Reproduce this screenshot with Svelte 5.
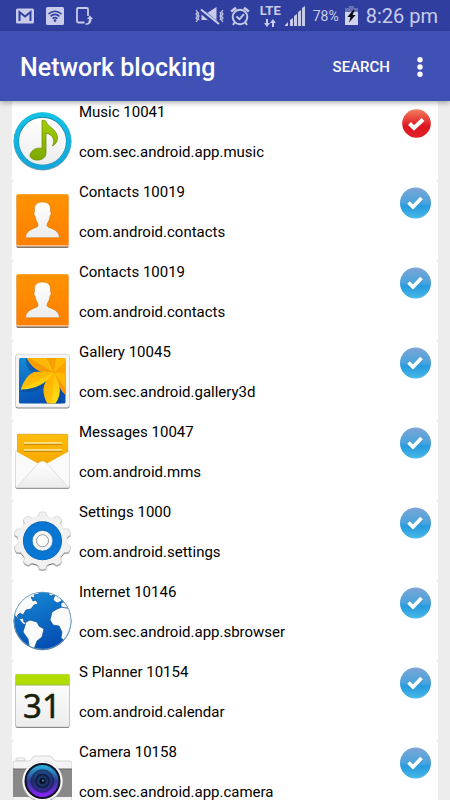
<script>
  let apps = $state([
    { name: 'Music', uid: 10041, pkg: 'com.sec.android.app.music', icon: 'music', blocked: true },
    { name: 'Contacts', uid: 10019, pkg: 'com.android.contacts', icon: 'contacts', blocked: false },
    { name: 'Contacts', uid: 10019, pkg: 'com.android.contacts', icon: 'contacts', blocked: false },
    { name: 'Gallery', uid: 10045, pkg: 'com.sec.android.gallery3d', icon: 'gallery', blocked: false },
    { name: 'Messages', uid: 10047, pkg: 'com.android.mms', icon: 'messages', blocked: false },
    { name: 'Settings', uid: 1000, pkg: 'com.android.settings', icon: 'settings', blocked: false },
    { name: 'Internet', uid: 10146, pkg: 'com.sec.android.app.sbrowser', icon: 'internet', blocked: false },
    { name: 'S Planner', uid: 10154, pkg: 'com.android.calendar', icon: 'planner', blocked: false },
    { name: 'Camera', uid: 10158, pkg: 'com.sec.android.app.camera', icon: 'camera', blocked: false }
  ]);
  const teeth = Array.from({ length: 10 }, (_, i) => i * 36);
</script>

<svg class="defs" aria-hidden="true">
  <defs>
    <linearGradient id="paper" x2="0" y2="1"><stop stop-color="#fff" /><stop offset="1" stop-color="#ededed" /></linearGradient>
    <linearGradient id="orange" x2="0" y2="1"><stop stop-color="#ff9200" /><stop offset="1" stop-color="#ff8000" /></linearGradient>
    <linearGradient id="cyan" x2="0" y2="1"><stop stop-color="#13c3e6" /><stop offset="1" stop-color="#14a5da" /></linearGradient>
    <linearGradient id="green" x2="0" y2="1"><stop stop-color="#a3cf00" /><stop offset="1" stop-color="#7ea800" /></linearGradient>
    <linearGradient id="sea" x2="0.3" y2="1"><stop stop-color="#168bd6" /><stop offset="1" stop-color="#0550b4" /></linearGradient>
    <linearGradient id="petal" x2="0.6" y2="1"><stop stop-color="#ffb000" /><stop offset="1" stop-color="#ffde12" /></linearGradient>
    <linearGradient id="amber" x2="0" y2="1"><stop stop-color="#fdbd0b" /><stop offset="1" stop-color="#f6a800" /></linearGradient>
    <linearGradient id="lens" x2="0" y2="1"><stop stop-color="#29b3df" /><stop offset="0.5" stop-color="#303b91" /><stop offset="1" stop-color="#8c22ff" /></linearGradient>
    <linearGradient id="red" x2="0" y2="1"><stop stop-color="#f08060" /><stop offset="0.45" stop-color="#e63030" /><stop offset="0.6" stop-color="#dc1621" /><stop offset="1" stop-color="#e32028" /></linearGradient>
    <linearGradient id="blue" x2="0" y2="1"><stop stop-color="#7ba5d6" /><stop offset="0.5" stop-color="#4ba4dc" /><stop offset="0.6" stop-color="#279ade" /><stop offset="1" stop-color="#48b9e8" /></linearGradient>
    <clipPath id="photo"><rect x="7" y="7" width="46.500" height="45.500" rx="1.500" /></clipPath>
    <clipPath id="globe"><circle cx="30.500" cy="29.700" r="28.600" /></clipPath>
  </defs>
</svg>

<div class="screen">
  <div class="status">
    <div class="group notices">
      <svg width="18" height="16" viewBox="0 0 18 16"><rect width="18" height="15" y=".5" rx="1.500" fill="#c8ccea" /><path d="M3.500 13V4l5.500 4.500L14.500 4v9" fill="none" stroke="#303f9f" stroke-width="2" /></svg>
      <svg width="18" height="18" viewBox="0 0 18 18"><rect width="18" height="18" rx="1.500" fill="#c8ccea" /><g fill="none" stroke="#303f9f" stroke-width="1.600"><path d="M2.500 7Q9 1.500 15.500 7M4.500 9.300Q9 5.300 13.500 9.300M6.500 11.700Q9 9.500 11.500 11.700" /></g><circle cx="9" cy="13.600" r="1.300" fill="#303f9f" /></svg>
      <svg width="17" height="18" viewBox="0 0 17 18"><path d="M8.500 15.500H2.200Q1 15.500 1 14.300V2.200Q1 1 2.200 1h8.600Q12 1 12 2.200V9" fill="none" stroke="#c8ccea" stroke-width="1.800" /><path d="M9.500 16.500q3.500 0 3.500-4.500h-2l3-3.500 3 3.500h-1.500q.5 5.500-6 6z" fill="#c8ccea" /></svg>
    </div>
    <div class="group signals">
      <svg width="29" height="18" viewBox="0 0 29 18"><g fill="none" stroke="#c8ccea" stroke-width="1.200"><path d="M1 3l1.500 2L1 7l1.500 2L1 11l1.500 2L1 15M4 5L3 7l1 2-1 2 1 2M25 5l1 2-1 2 1 2-1 2M28 3l-1.500 2L28 7l-1.500 2L28 11l-1.500 2 1.500 2" /></g><path d="M6.500 5.500H13L21.500 0v18L13 13H6.500z" fill="#c8ccea" /><path d="M4.500 2.500L24 19" stroke="#303f9f" stroke-width="5" /><path d="M6 2.500L24 17" stroke="#c8ccea" stroke-width="2" /></svg>
      <svg width="20" height="20" viewBox="0 0 20 20"><g fill="none" stroke="#c8ccea" stroke-width="1.900"><circle cx="10" cy="11" r="7.300" /><path d="M6.500 10.500l3 2.700 4.500-5M4.500 16.500L3 19M15.500 16.500L17 19" /><path d="M1.200 5.500L6 1.700M18.800 5.500L14 1.700" stroke-width="2.500" /></g></svg>
      <div class="lte"><span>LTE</span><svg width="12" height="8" viewBox="0 0 12 8"><path d="M2 0h2v4h2L3 8 0 4h2zM8 8h2V4h2L9 0 6 4h2z" fill="#c8ccea" /></svg></div>
      <svg class="bars" width="20" height="20" viewBox="0 0 20 20"><path d="M0 20v-1l3-3v4zM5 20v-6l3-2v8zM9 20V10l3-2v12zM13 20V6l3-2v16zM17 20V2l3-2v20z" fill="#c8ccea" /></svg>
      <span class="percent">78%</span>
      <svg class="battery" width="13" height="19" viewBox="0 0 13 19"><path d="M4 0h5v2h4v5H0V2h4z" fill="#6871b1" /><path d="M0 6h13v13H0z" fill="#d0d3ee" /><path d="M8.500 3.500L2.500 11h3L4 16.500l6.500-7.500h-3L9.500 4z" fill="#070914" /></svg>
      <span class="time">8:26 pm</span>
    </div>
  </div>

  <header>
    <h1>Network blocking</h1>
    <button class="search" type="button">SEARCH</button>
    <button class="more" type="button" aria-label="More options">
      <svg width="6" height="20" viewBox="0 0 6 20" fill="#fff"><circle cx="3" cy="2.700" r="2.700" /><circle cx="3" cy="10" r="2.700" /><circle cx="3" cy="17.300" r="2.700" /></svg>
    </button>
  </header>

  <main>
    <ul>
      {#each apps as app, i}
        <li>
          <svg class="icon" width="60" height="60" viewBox="0 0 60 60" aria-hidden="true">
            {#if app.icon === 'music'}
              <circle cx="30.500" cy="30.500" r="29" fill="#8b9ca3" />
              <circle cx="30.500" cy="30" r="28.800" fill="url(#cyan)" />
              <circle cx="30.500" cy="30" r="24" fill="#13799f" />
              <circle cx="30.500" cy="30.300" r="23.500" fill="url(#paper)" />
              <path d="M30 9.500q2.500-1 4 1c1 5 12 8 11.500 17-.3 4-2.500 6-5 7.500 2.500-5 1.500-11-6.500-13v20c0 5.500-6 7.500-10 7-5-.5-7.500-4-5-7.500 2.500-4 7-5 11-4z" fill="url(#green)" stroke="#668800" stroke-width=".7" />
            {:else if app.icon === 'contacts'}
              <rect x="4.500" y="4" width="52" height="53" rx="1.500" fill="#81756a" />
              <rect x="4.500" y="3.500" width="52" height="52" rx="1.500" fill="#f8d2a7" />
              <rect x="4.500" y="3.300" width="52" height="51" rx="1.500" fill="url(#orange)" />
              <path d="M13.500 46.700C14 40 19 38.500 25 36q1.500-1 .8-3.500Q23.500 29 23 25c-1.200-.7-1.500-4-.3-4.300C21.500 14 25 11 30.500 11s9 3 7.800 9.700c1.200.3.900 3.600-.3 4.300-.5 4-1.500 5.500-2.800 7.500q-.7 2.500.8 3.500C42 38.500 47 40 47.500 46.700z" fill="url(#paper)" stroke="#c96a00" stroke-width=".5" />
            {:else if app.icon === 'gallery'}
              <rect x="3.500" y="4" width="54" height="53.500" rx="2.500" fill="#858585" />
              <rect x="3.500" y="3.300" width="54" height="53" rx="2.500" fill="#f5f5f5" stroke="#cecece" stroke-width=".7" />
              <g clip-path="url(#photo)">
                <rect x="7" y="7" width="47" height="46" fill="url(#sea)" />
                <path d="M14 5Q13 20 24 22L8 41Q24 42 32 36q-2 10 4 18h13V42l6 4z" fill="#073f85" opacity=".5" />
                <path d="M42 21.500L34 5h22v40Q47 40 42 21.500z" fill="#ffb905" />
                <path d="M42 21.500Q22 24 14 5h20z" fill="#ffb80a" />
                <path d="M42 21.500Q22 24 14 5z" fill="#f99b00" />
                <path d="M42 21.500L34 5h10z" fill="#fa9f00" />
                <path d="M42 21.500L54 10v12z" fill="#fca300" />
                <path d="M42 21.500L55 40v5Q47 40 42 21.500z" fill="#f99600" />
                <path d="M42 21.500Q51 37 46 48L42 55h-5Q30 45 32 35 35 26 42 21.500z" fill="url(#petal)" />
                <path d="M42 21.500L39 55h-2Q30 45 32 35 35 26 42 21.500z" fill="#ff9e00" opacity=".35" />
                <path d="M42 21.500Q31 38 8.700 38.500 13 25 22 21q9-1 20 .5z" fill="url(#petal)" />
                <path d="M42 21.500L8.700 38.500Q13 25 22 21z" fill="#ff9e00" opacity=".3" />
              </g>
            {:else if app.icon === 'messages'}
              <path d="M3.500 20l27 10 27-10v36q0 2-2 2h-50q-2 0-2-2z" fill="#888" />
              <path d="M3.500 20h54v35q0 2-2 2h-50q-2 0-2-2z" fill="#f3f3f3" stroke="#b5b5b5" stroke-width=".7" />
              <path d="M5.500 3.300h50.200V22L34 33h-7L5.500 22z" fill="url(#amber)" stroke="#d99100" stroke-width=".6" />
              <path d="M12 13h38M12 20h38" stroke="#b97d00" stroke-width="1.300" /><path d="M12 12h38M12 19h38" stroke="#ffeda6" stroke-width="1.400" />
              <path d="M3.500 20L27 33v1L4.500 56.500l-1-2zM57.500 20L34 33v1l22.500 22.500 1-2z" fill="#fafafa" />
              <path d="M4.500 56.500L26 32.500q4.500-4.500 9 0l21.500 24z" fill="url(#paper)" stroke="#ccc" stroke-width=".6" />
            {:else if app.icon === 'settings'}
              {#each [['#777', 1.2], ['#f1f1f1', 0]] as layer}
                <g fill={layer[0]} transform="translate(0 {layer[1]})">
                  {#each teeth as angle}
                    <path d="M21.500 7.500q4-.5 5-3.500l.8-2.500Q30.500 0 33.700 1.500l.8 2.500q1 3 5 3.500z" transform="rotate({angle} 30.500 29.700)" stroke="#c4c4c4" stroke-width=".5" />
                  {/each}
                  <circle cx="30.500" cy="29.700" r="24.500" />
                </g>
              {/each}
              <circle cx="30.500" cy="29.700" r="19.500" fill="#075a9c" />
              <circle cx="30.500" cy="30" r="19" fill="#0877d4" />
              <circle cx="30.500" cy="29.700" r="10.300" fill="#f6f6f6" stroke="#075ea5" stroke-width=".6" />
              <circle cx="30.500" cy="29.700" r="6" fill="#fff" stroke="#969696" stroke-width="1" />
            {:else if app.icon === 'internet'}
              <circle cx="30.500" cy="30.200" r="29" fill="#647f94" />
              <circle cx="30.500" cy="29.700" r="28.700" fill="url(#sea)" />
              <g clip-path="url(#globe)" fill="#fafafa" stroke="#08529c" stroke-width=".7">
                <path d="M0 0h27v3l-5 1 1 3-4-1 2 4 3-1 2 4-4 1-3 4-5 1-3 5-3-2-3 3 3 3 3-1 1 4 5 1-1 2-5-1-4-5-4-3-2-4z" />
                <path d="M14 31l4-2 7 2 2 4 5 3-2 8-5 4-3 8-4 2-2-12-5-7z" />
                <path d="M44 4l4 2 2 4-5 2-4-3 1-3zM36 3l5-2 3 2-5 2zM60 15v24l-5 8-2 3-4-3 1-6-3-6-6-1-3-5 2-8 5-3 5-2 6 1z" />
                <path d="M49 12l5-2 4 6-4 1-5-1z" />
              </g>
              <circle cx="30.500" cy="29.700" r="28.500" fill="none" stroke="#6f9dba" stroke-width=".8" />
            {:else if app.icon === 'planner'}
              <rect x="3.500" y="4" width="54" height="53" rx="2" fill="#777" />
              <rect x="3.500" y="3.300" width="54" height="52.700" rx="2" fill="url(#paper)" stroke="#bbb" stroke-width=".6" />
              <path d="M3.500 3.300h54v10.500h-54z" fill="#b1dc00" /><path d="M3.500 14h54" stroke="#789d00" stroke-width=".7" />
              <text x="30" y="47" text-anchor="middle" class="date">31</text>
            {:else}
              <path d="M4 10V8q0-1 1-1h7q1 0 1 1v2z" fill="#f5f5f5" stroke="#c5c5c5" stroke-width=".7" />
              <path d="M1 12q0-2 2-2h15l3-4q1-1 3-1h13q2 0 3 1l3 4h15q2 0 2 2v44H1z" fill="#f4f4f4" stroke="#c5c5c5" stroke-width=".7" />
              <path d="M1 18h59v28H1z" fill="#898989" /><path d="M1 18h59" stroke="#666" />
              <circle cx="30.500" cy="30.500" r="20.500" fill="#aaa" /><circle cx="30.500" cy="30" r="20" fill="#f8f8f8" />
              <circle cx="30.500" cy="30" r="18" fill="#101122" />
              <circle cx="30.500" cy="30" r="16" fill="url(#lens)" />
              <circle cx="30.500" cy="30" r="11" fill="#172a62" opacity=".65" stroke="#111b48" stroke-width="1.500" />
              <circle cx="30.500" cy="30" r="6.500" fill="#1b3466" stroke="#101d44" stroke-width="1.500" />
              <circle cx="30.500" cy="30" r="3" fill="#0a0d24" /><circle cx="31" cy="29.500" r="1" fill="#3bb0c4" />
            {/if}
          </svg>
          <label class="info" for="block-{i}">
            <span>{app.name} {app.uid}</span>
            <span>{app.pkg}</span>
          </label>
          <span class="toggle">
            <input id="block-{i}" type="checkbox" bind:checked={app.blocked} />
            <svg width="32" height="32" viewBox="0 0 32 32" aria-hidden="true">
              {#if app.blocked}
                <circle cx="16.500" cy="16.500" r="14.300" fill="url(#red)" />
                <path d="M9.500 16.500l4.500 4.500 9-8.500" fill="none" stroke="#fff" stroke-width="4" />
              {:else}
                <circle cx="15.500" cy="16" r="15.500" fill="url(#blue)" />
                <path d="M8.500 16l4.500 4.500 8.500-9" fill="none" stroke="#2376ab" stroke-width="5" opacity=".3" />
                <path d="M8.500 15.500l4.500 4.500 8.500-9" fill="none" stroke="#fff" stroke-width="3.800" />
              {/if}
            </svg>
          </span>
        </li>
      {/each}
    </ul>
  </main>
</div>

<style>
  :global(body) { margin: 0; }
  .defs { position: absolute; width: 0; height: 0; }
  .screen { display: flex; flex-direction: column; height: 100vh; overflow: hidden; background: #ededed; color: #000; font-family: Roboto, "Liberation Sans", sans-serif; }
  svg { display: block; flex: none; }
  .status { display: flex; flex: none; align-items: center; justify-content: space-between; height: 31px; padding: 0 12px 0 16px; background: #303f9f; color: #c8ccea; box-sizing: border-box; }
  .group { display: flex; align-items: center; }
  .notices { gap: 12px; }
  .signals { gap: 6px; }
  .lte { display: flex; flex-direction: column; align-items: center; gap: 2px; margin-left: 4px; font-size: 13px; line-height: 12px; font-weight: 700; }
  .bars { margin-left: -2px; }
  .percent { margin-left: 2px; font-size: 14px; }
  .time { margin-left: 2px; font-size: 20px; white-space: nowrap; }
  header { position: relative; z-index: 1; display: flex; flex: none; align-items: center; height: 70px; padding: 2px 12px 0 20px; background: #3f51b5; color: #fff; box-shadow: 0 2px 5px rgba(0, 0, 0, .3); box-sizing: border-box; }
  h1 { flex: 1; margin: 0; padding-top: 2px; font-size: 25px; line-height: 32px; font-weight: 500; white-space: nowrap; }
  button { padding: 0; border: 0; background: none; color: inherit; font: inherit; }
  .search { height: 48px; font-size: 15px; font-weight: 500; }
  .more { display: flex; align-items: center; justify-content: center; width: 36px; height: 48px; margin-left: 12px; }
  main { flex: 1; min-height: 0; overflow-y: auto; scrollbar-width: none; }
  ul { margin: 0; padding: 0 12px; list-style: none; }
  li { display: flex; align-items: flex-start; height: 80px; padding-right: 6px; border-radius: 3px; background: #fff; box-sizing: border-box; }
  .icon { margin-top: 10px; }
  .info { display: flex; flex: 1; flex-direction: column; gap: 20px; min-width: 0; margin: 1px 0 0 7px; font-size: 15px; line-height: 20px; }
  .toggle { position: relative; margin-top: 6px; }
  .toggle input { position: absolute; inset: 0; width: 100%; height: 100%; margin: 0; opacity: 0; }
  .date { font-family: "Noto Sans", sans-serif; font-size: 33px; fill: #172009; stroke: #172009; stroke-width: .5px; }
</style>
